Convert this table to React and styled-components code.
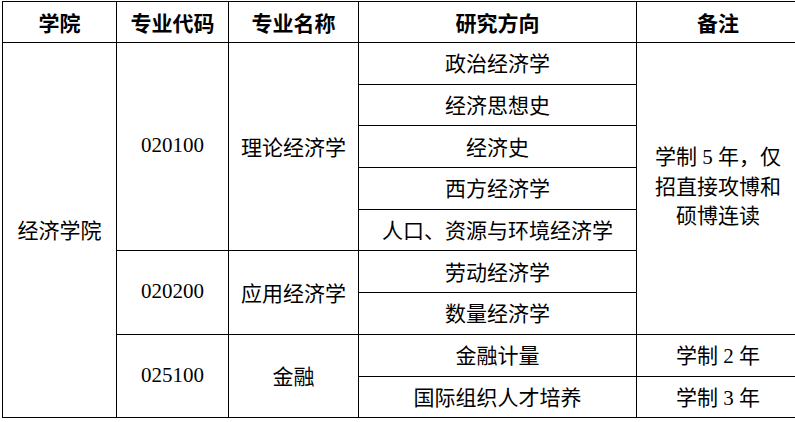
import React from 'react'
import styled, { createGlobalStyle } from 'styled-components'

const GlobalStyle = createGlobalStyle`
  html, body {
    margin: 0;
    padding: 0;
    background: #ffffff;
  }
  body {
    font-family: "Liberation Serif", "Noto Sans CJK SC", serif;
    color: #000000;
  }
`

const Page = styled.div`
  padding: 1px 0 0 2px;
`

const Table = styled.table`
  border-collapse: collapse;
  table-layout: fixed;
  width: 792px;
  border: 1.5px solid #000;
`

const Row = styled.tr`
  height: ${(p) => (p.$head ? 41 : 41.7)}px;
`

const HeadCell = styled.th`
  border: 1.5px solid #000;
  font-size: 21px;
  font-weight: bold;
  text-align: center;
  vertical-align: middle;
  padding: 0;
  width: ${(p) => p.$w}px;
`

const Cell = styled.td`
  border: 1.5px solid #000;
  font-size: 21px;
  font-weight: normal;
  text-align: center;
  vertical-align: middle;
  padding: 0 0 2px 0;
  line-height: ${(p) => (p.$lh ? p.$lh : 'normal')};
`

const columns = [
  { title: '学院', w: 113 },
  { title: '专业代码', w: 111 },
  { title: '专业名称', w: 129 },
  { title: '研究方向', w: 277 },
  { title: '备注', w: 162 },
]

const Remark = () => (
  <>
    学制 5 年，仅<br />
    招直接攻博和<br />
    硕博连读
  </>
)

export default function App() {
  return (
    <Page>
      <GlobalStyle />
      <Table>
        <thead>
          <Row $head>
            {columns.map((c) => (
              <HeadCell key={c.title} $w={c.w}>{c.title}</HeadCell>
            ))}
          </Row>
        </thead>
        <tbody>
          <Row>
            <Cell rowSpan={9}>经济学院</Cell>
            <Cell rowSpan={5}>020100</Cell>
            <Cell rowSpan={5}>理论经济学</Cell>
            <Cell>政治经济学</Cell>
            <Cell rowSpan={7} $lh="29.5px"><Remark /></Cell>
          </Row>
          <Row><Cell>经济思想史</Cell></Row>
          <Row><Cell>经济史</Cell></Row>
          <Row><Cell>西方经济学</Cell></Row>
          <Row><Cell>人口、资源与环境经济学</Cell></Row>
          <Row>
            <Cell rowSpan={2}>020200</Cell>
            <Cell rowSpan={2}>应用经济学</Cell>
            <Cell>劳动经济学</Cell>
          </Row>
          <Row><Cell>数量经济学</Cell></Row>
          <Row>
            <Cell rowSpan={2}>025100</Cell>
            <Cell rowSpan={2}>金融</Cell>
            <Cell>金融计量</Cell>
            <Cell>学制 2 年</Cell>
          </Row>
          <Row>
            <Cell>国际组织人才培养</Cell>
            <Cell>学制 3 年</Cell>
          </Row>
        </tbody>
      </Table>
    </Page>
  )
}
